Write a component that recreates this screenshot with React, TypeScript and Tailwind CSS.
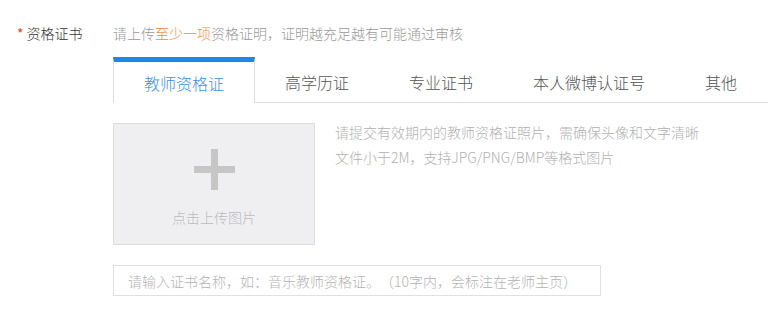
import React from 'react';

const tabs = ['教师资格证', '高学历证', '专业证书', '本人微博认证号', '其他'];

const font = {
    fontFamily: '"Noto Sans CJK SC", "Liberation Sans", sans-serif',
};

export default function App() {
    const active = 0;

    return (
        <div
            className="w-[768px] h-[334px] bg-white overflow-hidden font-light [text-spacing-trim:space-all]"
            style={font}
        >
            <div className="flex pt-[23px]">
                {/* Label */}
                <div className="w-[113px] shrink-0 pl-[17px] text-[14px] leading-[20px] text-[#333]">
                    <span className="text-[#e0412c] font-normal mr-[3px]">*</span>
                    资格证书
                </div>

                {/* Content */}
                <div className="flex-1 flex flex-col">
                    <p className="text-[14px] leading-[20px] text-[#999]">
                        请上传<span className="text-[#f08c3e]">至少一项</span>
                        资格证明，证明越充足越有可能通过审核
                    </p>

                    {/* Tabs */}
                    <div className="flex mt-[14px] h-[46px]">
                        {tabs.map((tab, i) => (
                            <div
                                key={tab}
                                className={
                                    i === active
                                        ? 'flex items-center justify-center px-[30px] border-t-[5px] border-t-[#1e88e5] border-x border-x-[#dddddd] text-[16px] text-[#3a8ee6] bg-white'
                                        : 'flex items-center justify-center px-[30px] border-t-[5px] border-t-transparent border-b border-b-[#dddddd] text-[16px] text-[#555]'
                                }
                            >
                                {tab}
                            </div>
                        ))}
                        <div className="flex-1 border-b border-b-[#dddddd]" />
                    </div>

                    {/* Upload */}
                    <div className="flex items-start mt-[20px] gap-[20px]">
                        <div className="w-[202px] h-[122px] border border-[#dcdcdc] bg-[#efeff1] flex flex-col items-center pt-[25px] cursor-pointer">
                            <svg width="41" height="41" viewBox="0 0 41 41">
                                <rect x="17" y="0" width="7" height="41" fill="#c6c6c6" />
                                <rect x="0" y="17" width="41" height="7" fill="#c6c6c6" />
                            </svg>
                            <span className="mt-[17px] text-[14px] leading-[20px] text-[#bbb]">
                                点击上传图片
                            </span>
                        </div>
                        <div className="-mt-[3px] text-[14px] leading-[25px] text-[#b0b0b0]">
                            <p>请提交有效期内的教师资格证照片，需确保头像和文字清晰</p>
                            <p>文件小于2M，支持JPG/PNG/BMP等格式图片</p>
                        </div>
                    </div>

                    {/* Certificate name */}
                    <input
                        type="text"
                        placeholder="请输入证书名称，如：音乐教师资格证。（10字内，会标注在老师主页）"
                        className="mt-[20px] w-[488px] h-[31px] border border-[#e0e0e0] pl-[14px] text-[14px] font-light text-[#333] placeholder:text-[#b3b3b3] outline-none [text-spacing-trim:space-all]"
                        style={font}
                    />
                </div>
            </div>
        </div>
    );
}
